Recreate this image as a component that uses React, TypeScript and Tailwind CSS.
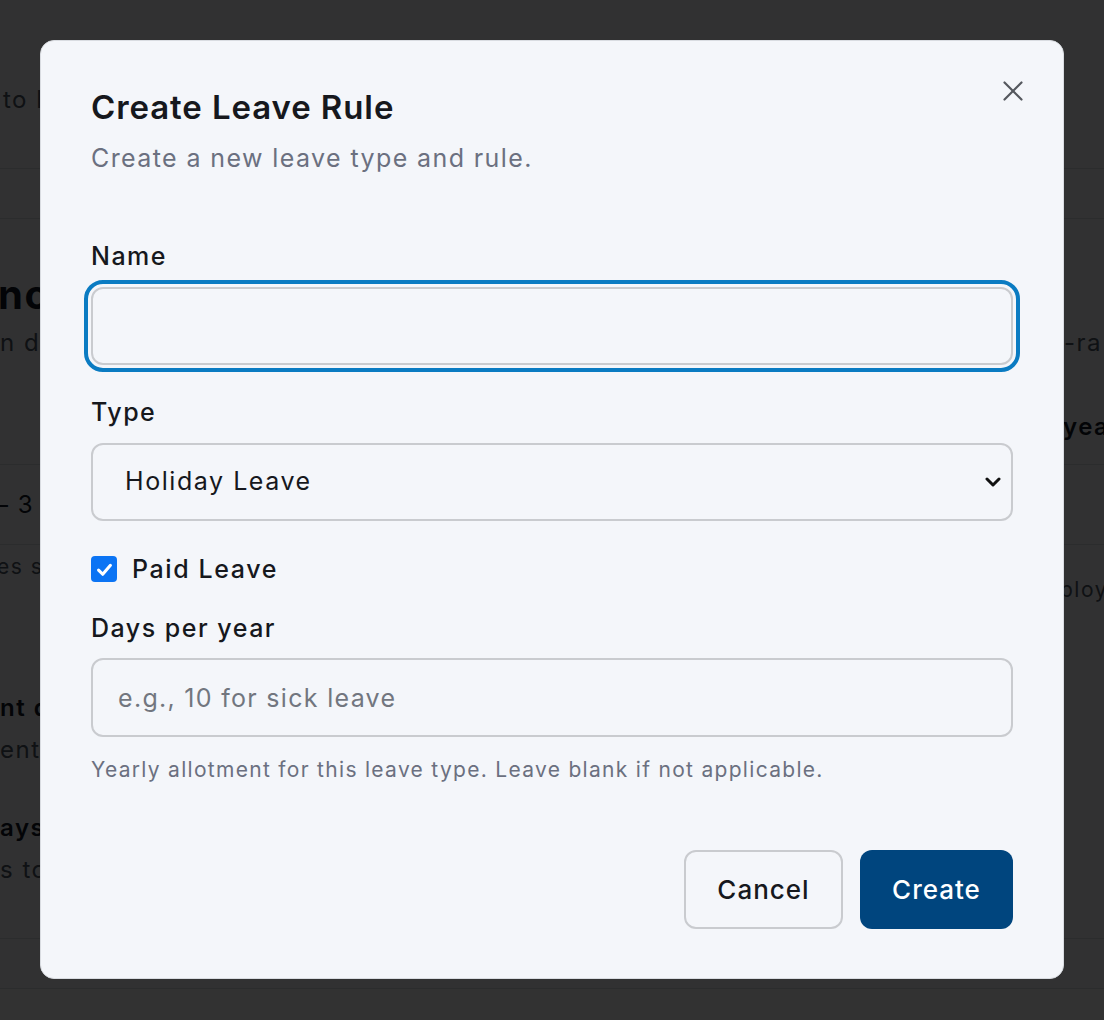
import { useState } from 'react'

function BackgroundPage() {
  return (
    <div className="flex flex-col overflow-hidden text-[#4b5563] whitespace-nowrap tracking-[1.5px]">
      {/* header */}
      <div className="h-[169px] flex items-end pb-[52px] border-b border-[#d6d9de]">
        <span className="text-[24px] leading-[32px] pl-[3px]">to l</span>
      </div>
      <div className="h-[50px] border-b border-[#d6d9de]" />

      {/* section heading + table header */}
      <div className="flex flex-col pt-[52px] pb-[21px] border-b border-[#d6d9de]">
        <span className="text-[40px] leading-[48px] font-bold text-[#111827] -ml-[2px]">nc</span>
        <div className="flex mt-[8px] text-[24px] leading-[32px]">
          <span className="w-[1064px] shrink-0">n da</span>
          <span>-ra</span>
        </div>
        <div className="flex mt-[52px] text-[24px] leading-[32px] font-semibold text-[#111827]">
          <span className="w-[1063px] shrink-0" />
          <span>yea</span>
        </div>
      </div>

      <div className="h-[80px] flex items-center border-b border-[#d6d9de] text-[24px] text-[#111827]">
        <span className="-ml-[4px]">– 3</span>
      </div>

      {/* notes */}
      <div className="flex flex-col pt-[8px] pb-[52px] border-b border-[#d6d9de]">
        <span className="text-[21px] leading-[28px] -ml-[3px]">es s</span>
        <div className="flex -mt-[5px] text-[21px] leading-[28px]">
          <span className="w-[1060px] shrink-0" />
          <span>ploy</span>
        </div>
        <span className="mt-[88px] text-[24px] leading-[32px] font-semibold text-[#111827]">nt d</span>
        <span className="mt-[10px] text-[24px] leading-[32px]">enti</span>
        <span className="mt-[46px] text-[24px] leading-[32px] font-semibold text-[#111827]">ays</span>
        <span className="mt-[10px] text-[24px] leading-[32px]">s to</span>
      </div>
      <div className="h-[50px] border-b border-[#d6d9de]" />
      <div className="h-[40px] bg-[#f7f8fb]" />
    </div>
  )
}

function CloseIcon() {
  return (
    <svg viewBox="0 0 22 22" className="w-[22px] h-[22px]" fill="none" stroke="#55585e" strokeWidth="2.2" strokeLinecap="round">
      <line x1="2.5" y1="2.5" x2="19.5" y2="19.5" />
      <line x1="19.5" y1="2.5" x2="2.5" y2="19.5" />
    </svg>
  )
}

export default function App() {
  const [paid, setPaid] = useState(true)

  return (
    <div className="relative h-[1020px] overflow-hidden bg-[#f4f6fa] font-['Inter','Noto_Sans',sans-serif]">
      <BackgroundPage />

      {/* ── DIALOG OVERLAY ── */}
      <div className="fixed inset-0 bg-black/80 flex items-start pt-[40px] pl-[40px]">
        <div className="relative w-[1024px] rounded-[14px] border border-[#d9dce1] bg-[#f4f6fa] px-[50px] pt-[46px] pb-[49px] text-[#16181d]">
          <button className="absolute top-[39px] right-[39px]" aria-label="Close">
            <CloseIcon />
          </button>

          <h2 className="text-[33px] leading-[40px] font-semibold tracking-[0.9px]">Create Leave Rule</h2>
          <p className="mt-[15px] text-[25px] leading-[32px] tracking-[1.4px] text-[#6b7080]">Create a new leave type and rule.</p>

          <form className="mt-[66px] flex flex-col tracking-[1.5px]" onSubmit={(e) => e.preventDefault()}>
            <label className="text-[25px] leading-[32px] font-medium">Name</label>
            <input
              className="mt-[15px] h-[78px] w-full rounded-[12px] border-2 border-[#c9cbcf] bg-[#f4f6fa] px-[25px] text-[25px] outline-solid outline-[4px] outline-[#0a7bc2] outline-offset-[3px]"
            />

            <label className="mt-[31px] text-[25px] leading-[32px] font-medium">Type</label>
            <div className="relative mt-[15px]">
              <select className="appearance-none h-[78px] w-full rounded-[12px] border-2 border-[#c9cbcf] bg-[#f4f6fa] px-[32px] text-[25px] tracking-[1.55px] text-[#16181d] outline-none">
                <option>Holiday Leave</option>
                <option>Sick Leave</option>
              </select>
              <svg viewBox="0 0 16 10" className="pointer-events-none absolute right-[12px] top-[34px] w-[16px] h-[10px]" fill="none" stroke="#111" strokeWidth="3" strokeLinecap="round" strokeLinejoin="round">
                <polyline points="2,2 8,8 14,2" />
              </svg>
            </div>

            <label className="mt-[32px] h-[32px] flex items-center gap-[15px] cursor-pointer" onClick={() => setPaid(!paid)}>
              <span className={`w-[26px] h-[26px] rounded-[4px] flex items-center justify-center ${paid ? 'bg-[#0b74f4]' : 'border-2 border-[#8a8f98] bg-white'}`}>
                {paid && (
                  <svg viewBox="0 0 16 16" className="w-[19px] h-[19px]" fill="none" stroke="white" strokeWidth="2.6" strokeLinecap="round" strokeLinejoin="round">
                    <polyline points="3,8.5 6.5,12 13,4.5" />
                  </svg>
                )}
              </span>
              <span className="text-[25px] leading-[32px] font-medium tracking-[1.6px]">Paid Leave</span>
            </label>

            <label className="mt-[27px] text-[25px] leading-[32px] font-medium">Days per year</label>
            <input
              placeholder="e.g., 10 for sick leave"
              className="mt-[14px] h-[79px] w-full rounded-[12px] border-2 border-[#c9cbcf] bg-[#f4f6fa] px-[25px] text-[25px] tracking-[1.3px] placeholder:text-[#72767f] outline-none"
            />
            <p className="mt-[19px] text-[21px] leading-[28px] tracking-[1.3px] text-[#6b7080]">
              Yearly allotment for this leave type. Leave blank if not applicable.
            </p>

            <div className="mt-[66px] flex justify-end gap-[17px] tracking-[1px]">
              <button type="button" className="w-[159px] h-[79px] rounded-[12px] border-2 border-[#c9cbcf] bg-[#f4f6fa] text-[26px] font-medium text-[#16181d]">
                Cancel
              </button>
              <button type="submit" className="w-[153px] h-[79px] rounded-[12px] bg-[#00457e] text-[26px] font-medium text-white">
                Create
              </button>
            </div>
          </form>
        </div>
      </div>
    </div>
  )
}
